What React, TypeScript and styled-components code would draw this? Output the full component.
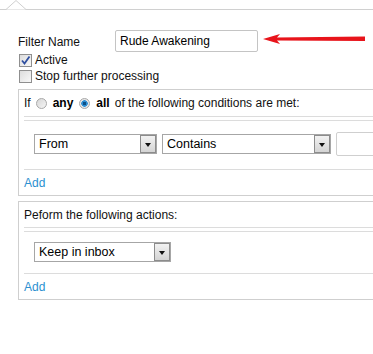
import styled, { createGlobalStyle } from 'styled-components';

const GlobalStyle = createGlobalStyle`
  html, body {
    margin: 0;
    padding: 0;
    background: #fff;
    overflow: hidden;
  }
  body {
    font-family: 'Liberation Sans', Arial, sans-serif;
    font-size: 12px;
    color: #111;
  }
`;

function App() {
  return (
    <Page>
      <GlobalStyle />
      <TopBar>
        <Notch width="22" height="10" viewBox="0 0 22 10">
          <polyline points="0,9.5 10,0.5 20,9.5" fill="#fff" stroke="#cfcfcf" strokeWidth="1" />
        </Notch>
      </TopBar>
      <Form>
        <NameRow>
          <Label>Filter Name</Label>
          <NameInput>Rude Awakening</NameInput>
          <Pointer width="104" height="12" viewBox="0 0 104 12">
            <polygon points="0,6 17,1 14,4.6 102,3.5 102,8 14,7.4 17,11" fill="#e8141b" />
          </Pointer>
        </NameRow>
        <CheckRow>
          <CheckBox>
            <svg width="11" height="11" viewBox="0 0 11 11">
              <polyline points="2,5.5 4.5,8.5 9.5,1.5" fill="none" stroke="#2f4fa0" strokeWidth="1.8" />
            </svg>
          </CheckBox>
          Active
        </CheckRow>
        <CheckRow>
          <CheckBox />
          Stop further processing
        </CheckRow>

        <Section>
          <SectionHead $h={26}>
            If <Radio /> <Strong>any</Strong> <Radio $on /> <Strong>all</Strong> of the following conditions are met:
          </SectionHead>
          <SectionBody $top={11} $bottom={13}>
            <Select $w={123}>
              <span>From</span>
              <DropButton />
            </Select>
            <Select $w={169} $gap={5}>
              <span>Contains</span>
              <DropButton />
            </Select>
            <ValueInput />
          </SectionBody>
          <SectionFoot>
            <AddLink>Add</AddLink>
          </SectionFoot>
        </Section>

        <Section>
          <SectionHead $h={25}>Peform the following actions:</SectionHead>
          <SectionBody $top={10} $bottom={11}>
            <Select $w={137}>
              <span>Keep in inbox</span>
              <DropButton />
            </Select>
          </SectionBody>
          <SectionFoot>
            <AddLink>Add</AddLink>
          </SectionFoot>
        </Section>
      </Form>
    </Page>
  );
}

const Page = styled.div`
  width: 373px;
  height: 354px;
  overflow: hidden;
`;

const TopBar = styled.div`
  position: relative;
  height: 9px;
  border-bottom: 1px solid #d0d0d0;
`;

const Notch = styled.svg`
  position: absolute;
  left: 6px;
  top: 0;
  display: block;
`;

const Form = styled.div`
  padding-left: 18px;
`;

const NameRow = styled.div`
  display: flex;
  align-items: center;
  margin-top: 20px;
  height: 22px;
`;

const Label = styled.div`
  width: 97px;
  padding-top: 2px;
`;

const NameInput = styled.div`
  box-sizing: border-box;
  width: 143px;
  height: 22px;
  border: 1px solid #c4c4c4;
  border-radius: 2px;
  padding: 0 4px;
  display: flex;
  align-items: center;
  color: #000;
`;

const Pointer = styled.svg`
  display: block;
  margin-left: 5px;
  margin-top: -4px;
`;

const CheckRow = styled.div`
  display: flex;
  align-items: center;
  gap: 3px;
  height: 16px;
  margin-left: 1px;
`;

const CheckBox = styled.span`
  box-sizing: border-box;
  width: 13px;
  height: 13px;
  border: 1px solid #8f8f8f;
  background: linear-gradient(135deg, #dcdcdc, #f8f8f8);
  display: flex;
  align-items: center;
  justify-content: center;
`;

const Section = styled.div`
  margin-top: 5px;
  margin-right: -40px;
  border: 1px solid #cfcfcf;
`;

const SectionHead = styled.div<{ $h: number }>`
  height: ${(p) => p.$h}px;
  margin: 0 0 3px 5px;
  border-bottom: 1px solid #dcdcdc;
  display: flex;
  align-items: center;
  gap: 4px;
  white-space: nowrap;
`;

const Strong = styled.b`
  font-weight: bold;
  color: #000;
  margin: 0 1px;
`;

const Radio = styled.span<{ $on?: boolean }>`
  box-sizing: border-box;
  width: 11px;
  height: 11px;
  border-radius: 50%;
  border: 1px solid #a8a8a8;
  background: ${(p) =>
    p.$on
      ? 'radial-gradient(circle, #0b4f86 0 1.5px, #2f8fd4 2px 3px, #e6e6e6 3.5px)'
      : 'linear-gradient(135deg, #d6d6d6, #f6f6f6)'};
  margin: 0 1px;
`;

const SectionBody = styled.div<{ $top: number; $bottom: number }>`
  margin-left: 5px;
  border-top: 1px solid #dcdcdc;
  border-bottom: 1px solid #dcdcdc;
  padding: ${(p) => p.$top}px 0 ${(p) => p.$bottom}px 10px;
  display: flex;
  align-items: center;
`;

const Select = styled.div<{ $w: number; $gap?: number }>`
  box-sizing: border-box;
  width: ${(p) => p.$w}px;
  height: 20px;
  margin-right: ${(p) => p.$gap ?? 0}px;
  & + & {
    margin-left: 5px;
  }
  border: 1px solid #a6a6a6;
  padding-left: 4px;
  display: flex;
  align-items: center;
  justify-content: space-between;
  color: #000;
  font-size: 12.5px;
`;

const DropButton = styled.span`
  box-sizing: border-box;
  width: 16px;
  height: 18px;
  border: 1px solid #8c8c8c;
  background: linear-gradient(#f2f2f2, #d4d4d4);
  position: relative;
  &::after {
    content: '';
    position: absolute;
    left: 4px;
    top: 7px;
    border-left: 3.5px solid transparent;
    border-right: 3.5px solid transparent;
    border-top: 4px solid #111;
  }
`;

const ValueInput = styled.div`
  width: 60px;
  height: 22px;
  border: 1px solid #cfcfcf;
  border-radius: 2px;
`;

const SectionFoot = styled.div`
  height: 25px;
  margin-left: 5px;
  display: flex;
  align-items: center;
`;

const AddLink = styled.a`
  color: #2b8fd0;
  cursor: pointer;
  padding-top: 1px;
`;

export default App;
